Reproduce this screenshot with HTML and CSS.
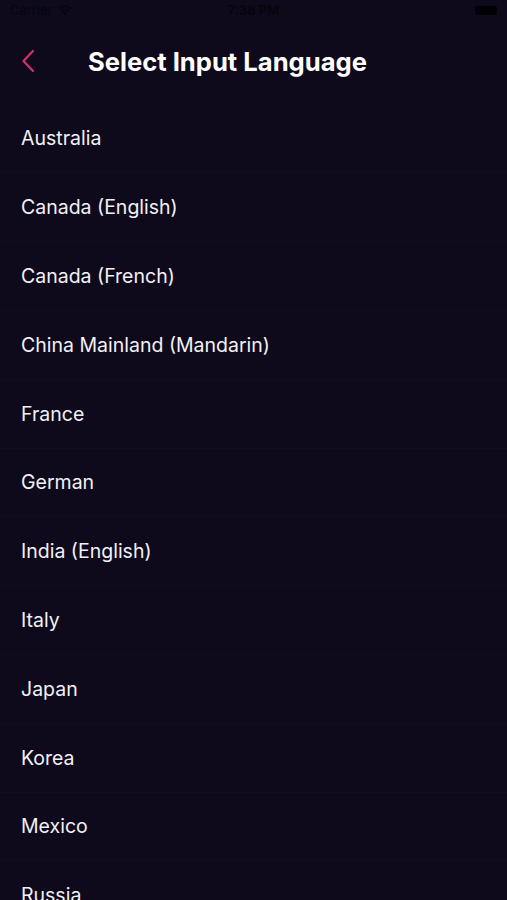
FILE: index.html
```html
<!DOCTYPE html>
<html>
<head>
<meta charset="utf-8">
<link rel="stylesheet" href="styles.css">
</head>
<body>
<div class="screen">
  <div class="status">
    <div class="status-left"><span>Carrier</span>
      <svg class="wifi" width="16" height="12" viewBox="0 0 16 12"><path d="M8 11.5 L5.6 8.6 A3.6 3.6 0 0 1 10.4 8.6 Z M3.6 6.4 A6.6 6.6 0 0 1 12.4 6.4 L11.3 7.7 A5 5 0 0 0 4.7 7.7 Z M1.4 4 A9.6 9.6 0 0 1 14.6 4 L13.5 5.3 A8 8 0 0 0 2.5 5.3 Z" fill="#06040c"/></svg>
    </div>
    <div class="status-time">7:38 PM</div>
    <div class="status-right"><div class="battery"></div></div>
  </div>
  <div class="nav">
    <svg class="back" width="14" height="24" viewBox="0 0 14 24"><path d="M12 2 L2.5 12 L12 22" fill="none" stroke="#d9306b" stroke-width="2.2" stroke-linecap="round" stroke-linejoin="round"/></svg>
    <h1 class="title">Select Input Language</h1>
  </div>
  <ul class="list">
    <li>Australia</li>
    <li>Canada (English)</li>
    <li>Canada (French)</li>
    <li>China Mainland (Mandarin)</li>
    <li>France</li>
    <li>German</li>
    <li>India (English)</li>
    <li>Italy</li>
    <li>Japan</li>
    <li>Korea</li>
    <li>Mexico</li>
    <li>Russia</li>
  </ul>
</div>
</body>
</html>
```
FILE: styles.css
```css
html, body {
  margin: 0;
  padding: 0;
  background: #0e0a1c;
}
.screen {
  width: 507px;
  height: 900px;
  overflow: hidden;
  background: #0e0a1c;
  font-family: Inter, "Liberation Sans", sans-serif;
  color: #f2f0f5;
}
.status {
  height: 20px;
  display: flex;
  align-items: center;
  justify-content: space-between;
  padding: 0 10px;
  font-size: 13px;
  color: #06040c;
}
.status-left {
  display: flex;
  align-items: center;
  gap: 4px;
  width: 100px;
}
.status-time {
  font-weight: 600;
}
.status-right {
  width: 100px;
  display: flex;
  justify-content: flex-end;
}
.battery {
  width: 22px;
  height: 9px;
  background: #020105;
  border-radius: 2px;
}
.nav {
  height: 84px;
  display: flex;
  align-items: center;
  padding-left: 21px;
  box-sizing: border-box;
  padding-bottom: 2px;
}
.back {
  display: block;
  margin-right: 53px;
}
.title {
  margin: 0;
  font-size: 25.6px;
  font-weight: 700;
  color: #ffffff;
}
.list {
  list-style: none;
  margin: 0;
  padding: 0;
  margin-top: 0.6px;
}
.list li {
  height: 68.8px;
  display: flex;
  align-items: center;
  padding-left: 21px;
  font-size: 19.5px;
  border-bottom: 1px solid #110d20;
  box-sizing: border-box;
}
```
